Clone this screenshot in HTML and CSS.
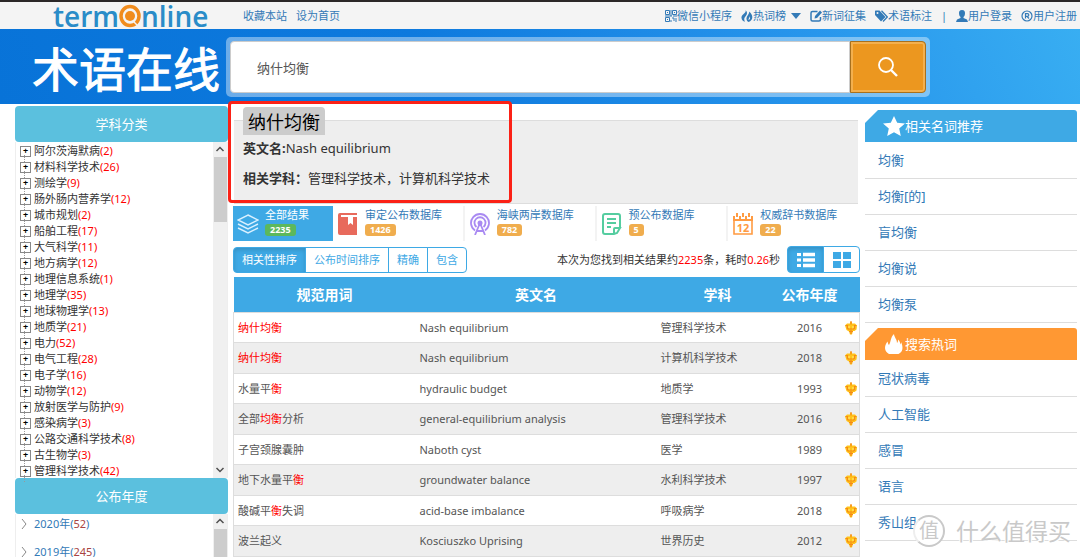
FILE: index.html
```html
<!DOCTYPE html>
<html lang="zh-CN">
<head>
<meta charset="utf-8">
<meta name="viewport" content="width=device-width, initial-scale=1">
<title>术语在线</title>
<link rel="stylesheet" href="styles.css">
</head>
<body>
<svg class="sprite" aria-hidden="true">
  <symbol id="gold" viewBox="0 0 12 14">
    <path d="M5 1h2v1.500h3l2 2-.5 4-2 1.500H8L7 13.500H5L4 10.500 1.500 9 0 4.500l2-2h3z" fill="#ffc31a"/>
    <path d="M6 0v3.500M.5 4.500h2v3l2 1M11.500 4.500h-2v3l-2 1M4 10.500h4M6 7v6" fill="none" stroke="#f58a18" stroke-width="1.200"/>
    <path d="M4 5v2M8 5v2" stroke="#fff27a"/>
  </symbol>
  <symbol id="up" viewBox="0 0 10 6"><path d="M1.500 5 5 1.500 8.500 5" fill="none" stroke="#505050" stroke-width="1.500"/></symbol>
  <symbol id="down" viewBox="0 0 10 6"><path d="M1.500 1 5 4.500 8.500 1" fill="none" stroke="#505050" stroke-width="1.500"/></symbol>
</svg>

<div class="topbar">
  <a class="brand" href="#" aria-label="termonline"><span>term</span><svg class="brand-o" viewBox="0 0 22 24"><ellipse cx="11" cy="12" rx="9" ry="9.500" fill="none" stroke="#f08c1e" stroke-width="3.500"/><circle cx="11" cy="12" r="5" fill="#f08c1e"/><path d="m14 17 4 4" stroke="#f4f4f4" stroke-width="1.500"/></svg><span>nline</span></a>
  <nav class="toplinks"><a href="#">收藏本站</a><a href="#">设为首页</a></nav>
  <nav class="usernav">
    <a href="#"><svg viewBox="0 0 12 12"><path d="M.5.500h4v4h-4zM7.500.500h4v4h-4zM.5 7.500h4v4h-4zM6 0v6M0 6h7M8 6h4M7 8h2v3M11 8v4M6 10v2" fill="none" stroke="currentColor"/><path d="M2 2h1v1H2zM9 2h1v1H9zM2 9h1v1H2z" fill="currentColor"/></svg>微信小程序</a>
    <a href="#"><svg viewBox="0 0 12 12"><path d="M4.500 0C6 3 0 4 .5 8c.3 2 1.500 3.500 3.500 3.800C2.500 9 3.500 7.500 4.800 6 6.500 4 6.500 2 4.500 0zM8 1.500c1 2.500-3 4.500-2.500 7.500.2 1.500 1 2.500 2 3C12.500 10.500 12.500 5 8 1.500zM8.300 6c.8 1.500-.8 2.500-.8 4 1.500-.5 2.300-2 .8-4z" fill="currentColor" fill-rule="evenodd"/></svg>热词榜<svg class="caret" viewBox="0 0 10 6"><path d="M0 0h10L5 6z" fill="currentColor"/></svg></a>
    <a href="#"><svg viewBox="0 0 12 12"><path d="M7.500 1.500H2.500a1.500 1.500 0 0 0-1.500 1.500v6.500A1.500 1.500 0 0 0 2.500 11H9a1.500 1.500 0 0 0 1.500-1.500V7" fill="none" stroke="currentColor" stroke-width="1.500"/><path d="M4.500 8.500 5 6l5-5.500L12 2.500 7 8z" fill="currentColor"/></svg>新词征集</a>
    <a href="#"><svg class="wide" viewBox="0 0 13 12"><path d="M0 1v4l6 6.500L10.500 7 4.500.500H.5zM2.500 2a1 1 0 1 1 0 2 1 1 0 0 1 0-2z" fill="currentColor" fill-rule="evenodd"/><path d="M6.500.800 12.300 7 8 11.500" fill="none" stroke="currentColor" stroke-width="1.300"/></svg>术语标注</a>
    <span class="bar">|</span>
    <a href="#"><svg viewBox="0 0 12 12"><path d="M6 0C3.500 0 3 1.500 3 3c0 2 .5 3 1.500 4v1L1 9.500 0 12h12l-1-2.500L7.500 8V7C8.500 6 9 5 9 3c0-1.500-.5-3-3-3z" fill="currentColor"/></svg>用户登录</a>
    <a href="#"><svg viewBox="0 0 12 12"><circle cx="6" cy="6" r="5" fill="none" stroke="currentColor" stroke-width="1.200"/><path d="M4.500 8.500V3.700H6.500a1.300 1.300 0 0 1 0 2.600H4.500M6 6.300 8 8.500" fill="none" stroke="currentColor" stroke-width="1.200"/></svg>用户注册</a>
  </nav>
</div>

<header class="header">
  <h1 class="logo">术语在线</h1>
  <form class="search">
    <input type="text" value="纳什均衡" aria-label="搜索术语">
    <button type="button" aria-label="搜索"><svg viewBox="0 0 20 20"><circle cx="8" cy="8" r="7" fill="none" stroke="#fff" stroke-width="1.800"/><path d="m13 13 6 6" stroke="#fff" stroke-width="2.400"/></svg></button>
  </form>
</header>

<div class="page">
  <aside class="left">
    <h2 class="side-title">学科分类</h2>
    <div class="scrollbox">
      <ul class="tree">
        <li>阿尔茨海默病<em>(2)</em></li><li>材料科学技术<em>(26)</em></li><li>测绘学<em>(9)</em></li><li>肠外肠内营养学<em>(12)</em></li><li>城市规划<em>(2)</em></li><li>船舶工程<em>(17)</em></li><li>大气科学<em>(11)</em></li><li>地方病学<em>(12)</em></li><li>地理信息系统<em>(1)</em></li><li>地理学<em>(35)</em></li><li>地球物理学<em>(13)</em></li><li>地质学<em>(21)</em></li><li>电力<em>(52)</em></li><li>电气工程<em>(28)</em></li><li>电子学<em>(16)</em></li><li>动物学<em>(12)</em></li><li>放射医学与防护<em>(9)</em></li><li>感染病学<em>(3)</em></li><li>公路交通科学技术<em>(8)</em></li><li>古生物学<em>(3)</em></li><li>管理科学技术<em>(42)</em></li>
      </ul>
      <div class="bar-track"><svg><use href="#up"/></svg><i></i><svg class="end"><use href="#down"/></svg></div>
    </div>
    <h2 class="side-title">公布年度</h2>
    <div class="scrollbox">
      <ul class="years">
        <li><svg viewBox="0 0 6 10"><path d="m1 0 4 5-4 5" fill="none" stroke="#888"/></svg><a href="#">2020年(<em>52</em>)</a></li>
        <li><svg viewBox="0 0 6 10"><path d="m1 0 4 5-4 5" fill="none" stroke="#888"/></svg><a href="#">2019年(<em>245</em>)</a></li>
      </ul>
      <div class="bar-track"><svg><use href="#up"/></svg><i></i></div>
    </div>
  </aside>

  <main class="main">
    <section class="definition">
      <h2>纳什均衡</h2>
      <p><b>英文名:</b>Nash equilibrium</p>
      <p><b>相关学科：</b>管理科学技术，计算机科学技术</p>
      <div class="highlight"></div>
    </section>

    <nav class="tabs">
      <a class="active" href="#"><svg viewBox="0 0 22 22"><path d="M11 2 21 7 11 12 1 7zM1 11l10 5 10-5M1 15l10 5 10-5" fill="none" stroke="#d9f0ff" stroke-width="1.500"/></svg><span>全部结果<b>2235</b></span></a>
      <a href="#"><svg viewBox="0 0 22 22"><path d="M3 0h17v2H4v2h16v18H3a2 2 0 0 1-2-2V2a2 2 0 0 1 2-2z" fill="#e86a5c"/><path d="M11 4h5v8l-2.500-2L11 12z" fill="#fff"/></svg><span>审定公布数据库<b>1426</b></span></a>
      <a href="#"><svg viewBox="0 0 22 22"><g fill="none" stroke="#a98af2" stroke-width="1.800"><path d="M6 17.500a9 9 0 1 1 10 0M7.500 14a5.500 5.500 0 1 1 7 0M6 22l5-12 5 12M8 18h6"/></g><circle cx="11" cy="10" r="2.500" fill="#a98af2"/></svg><span>海峡两岸数据库<b>782</b></span></a>
      <a href="#"><svg viewBox="0 0 22 22"><path d="M12 21H4a2 2 0 0 1-2-2V3a2 2 0 0 1 2-2h13a2 2 0 0 1 2 2v11M6 6h9M6 10h9M6 14h4" fill="none" stroke="#55cda0" stroke-width="2"/><path d="M13 21v-5a1 1 0 0 1 1-1h5l-3 5z" fill="none" stroke="#55cda0" stroke-width="2"/></svg><span>预公布数据库<b>5</b></span></a>
      <a href="#"><svg viewBox="0 0 22 22"><path d="M1 3h2v3h4V3h2v3h4V3h2v3h4V3h2v5H1z" fill="#ff9b42"/><path d="M5 0v4M11 0v4M17 0v4" stroke="#ff9b42" stroke-width="2"/><path d="M2 7v14h18V7" fill="none" stroke="#ff9b42" stroke-width="1.600"/><text x="11" y="18.500" text-anchor="middle" class="cal">12</text></svg><span>权威辞书数据库<b>22</b></span></a>
    </nav>

    <div class="toolbar">
      <div class="sort"><button class="on" type="button">相关性排序</button><button type="button">公布时间排序</button><button type="button">精确</button><button type="button">包含</button></div>
      <p>本次为您找到相关结果约<em>2235</em>条，耗时<em>0.26</em>秒</p>
      <div class="views">
        <button class="on" type="button" aria-label="列表"><svg viewBox="0 0 18 16"><path d="M6 2.500h12M6 8h12M6 13.500h12" stroke="#fff" stroke-width="3.500"/><path d="M0 2.500h4M0 8h4M0 13.500h4" stroke="#fff" stroke-width="3"/></svg></button>
        <button type="button" aria-label="网格"><svg viewBox="0 0 18 16"><path d="M0 0h8v7H0zM10 0h8v7h-8zM0 9h8v7H0zM10 9h8v7h-8z" fill="#3ea9e5"/></svg></button>
      </div>
    </div>

    <table class="results">
      <colgroup><col class="c-term"><col class="c-en"><col class="c-sub"><col class="c-year"><col class="c-icon"></colgroup>
      <thead><tr><th>规范用词</th><th>英文名</th><th>学科</th><th>公布年度</th><th></th></tr></thead>
      <tbody>
        <tr><td><em>纳什均衡</em></td><td>Nash equilibrium</td><td>管理科学技术</td><td>2016</td><td><svg><use href="#gold"/></svg></td></tr>
        <tr><td><em>纳什均衡</em></td><td>Nash equilibrium</td><td>计算机科学技术</td><td>2018</td><td><svg><use href="#gold"/></svg></td></tr>
        <tr><td>水量平<em>衡</em></td><td>hydraulic budget</td><td>地质学</td><td>1993</td><td><svg><use href="#gold"/></svg></td></tr>
        <tr><td>全部<em>均衡</em>分析</td><td>general-equilibrium analysis</td><td>管理科学技术</td><td>2016</td><td><svg><use href="#gold"/></svg></td></tr>
        <tr><td>子宫颈腺囊肿</td><td>Naboth cyst</td><td>医学</td><td>1989</td><td><svg><use href="#gold"/></svg></td></tr>
        <tr><td>地下水量平<em>衡</em></td><td>groundwater balance</td><td>水利科学技术</td><td>1997</td><td><svg><use href="#gold"/></svg></td></tr>
        <tr><td>酸碱平<em>衡</em>失调</td><td>acid-base imbalance</td><td>呼吸病学</td><td>2018</td><td><svg><use href="#gold"/></svg></td></tr>
        <tr><td>波兰起义</td><td>Kosciuszko Uprising</td><td>世界历史</td><td>2012</td><td><svg><use href="#gold"/></svg></td></tr>
      </tbody>
    </table>
  </main>

  <aside class="right">
    <h2 class="tag"><svg viewBox="0 0 22 20"><path d="m11 0 3.200 6.800 7.800.800-5.800 5 1.600 7.400L11 16.200 4.200 20l1.600-7.400L0 7.600l7.800-.8z" fill="#fff"/></svg>相关名词推荐</h2>
    <ul class="words"><li><a href="#">均衡</a></li><li><a href="#">均衡[的]</a></li><li><a href="#">盲均衡</a></li><li><a href="#">均衡说</a></li><li><a href="#">均衡泵</a></li></ul>
    <h2 class="tag orange"><svg viewBox="0 0 22 20"><path d="M6 20C1 17 1 12 4.500 7.500 5 9 5 10 6 11 8 8 7.500 3 11 0c0 3 3 5 3 9 1-1 1-2 1-3.500 2 2 2 3 2.500 5C18 9.500 18 9 18 8c2.500 5 2 10-2.500 12z" fill="#fff"/></svg>搜索热词</h2>
    <ul class="words"><li><a href="#">冠状病毒</a></li><li><a href="#">人工智能</a></li><li><a href="#">感冒</a></li><li><a href="#">语言</a></li><li><a href="#">秀山组</a></li></ul>
  </aside>
</div>
<div class="watermark"><span>值</span>什么值得买</div>
</body>
</html>
```
FILE: styles.css
```css
* { box-sizing: border-box; }
body { margin: 0; height: 100vh; overflow: hidden; background: #fff; color: #333; font: 11px/16px "Noto Sans", "Noto Sans CJK SC", sans-serif; }
h1, h2, p, ul { margin: 0; padding: 0; font-weight: 400; }
ul { list-style: none; }
a { color: #337ab7; text-decoration: none; }
em { font-style: normal; color: #f00; }
svg { display: block; flex: none; }
button { font: inherit; padding: 0; cursor: pointer; }
.sprite { position: absolute; width: 0; height: 0; }

.topbar { display: flex; align-items: center; height: 29px; padding: 0 3px 0 53px; border-top: 2px solid #2b2727; background: #f4f4f4; white-space: nowrap; }
.brand { display: flex; align-items: center; width: 190px; color: #2a8cc8; font: 600 28px/26px "Open Sans", "Noto Sans", sans-serif; }
.brand-o { width: 22px; height: 24px; }
.toplinks { display: flex; gap: 9px; }
.usernav { display: flex; align-items: center; gap: 9px; margin-left: auto; }
.usernav a { display: flex; align-items: center; }
.usernav svg { width: 12px; height: 12px; }
.usernav .wide { width: 13px; }
.usernav .caret { width: 10px; height: 6px; margin-left: 5px; }
.bar { color: #337ab7; }

.header { display: flex; align-items: center; height: 75px; padding: 0 150px 0 32px; background: linear-gradient(65deg, #0873d8 0%, #0e7ade 40%, #2896ec 76%, #38aef2 100%); }
.logo { width: 194px; flex: none; color: #fff; font: 400 47px/60px "Noto Sans CJK SC", sans-serif; -webkit-text-stroke: 1px #fff; white-space: nowrap; }
.search { display: flex; flex: 1; height: 60px; padding: 4px; border-radius: 5px; background: rgba(255, 255, 255, .4); }
.search input { flex: 1; min-width: 0; padding: 2px 26px 0; border: 1px solid #ccc; border-radius: 4px 0 0 4px; background: #fff; color: #555; font: inherit; font-size: 13px; }
.search button { display: grid; place-items: center; width: 76px; border: 1px solid #a8701c; border-radius: 0 4px 4px 0; background: #ec971f; box-shadow: inset 0 0 0 2px #f3b04e; }
.search button svg { width: 20px; height: 20px; }

.page { display: grid; grid-template-columns: 213px minmax(0, 1fr) 212px; gap: 5px; padding: 2px 3px 0 15px; }
.side-title { height: 36px; border-radius: 4px; background: #5bc0de; color: #fff; font-size: 13px; line-height: 36px; text-align: center; }
.scrollbox { display: flex; border: 1px solid #eee; border-top: 0; border-bottom: 0; }
.tree { flex: 1; padding-left: 4px; }
.tree li { position: relative; height: 16px; padding-left: 14px; line-height: 18px; white-space: nowrap; }
.tree li::before { content: "+"; position: absolute; left: 0; top: 4px; width: 9px; height: 9px; border: 1px solid #888; color: #000; font-size: 9px; font-weight: 700; line-height: 7px; text-align: center; }
.tree li::after { content: ""; position: absolute; left: 4px; top: 13px; height: 7px; border-left: 1px dotted #999; }
.bar-track { display: flex; flex-direction: column; align-items: center; width: 14px; padding-top: 4px; background: #f0f0f0; }
.bar-track svg { width: 10px; height: 6px; }
.bar-track i { width: 13px; height: 65px; margin-top: 5px; background: #cdcdcd; }
.bar-track .end { margin: auto 0 5px; }
.years { flex: 1; padding: 0 5px; }
.years li { display: flex; align-items: center; gap: 7px; height: 20px; margin-bottom: 8px; }
.years svg { width: 6px; height: 10px; }
.years em { color: #a94442; }

.main { min-width: 0; }
.definition { position: relative; height: 98px; margin: 0 2px 0 1px; padding: 1px 9px; background: linear-gradient(#fff 14px, #ddd 14px, #ddd 15px, #eee 15px); border-bottom: 1px solid #ddd; }
.definition h2 { display: inline-block; height: 28px; margin-bottom: 3px; padding: 0 5px; border-radius: 4px 4px 0 0; background: #ccc; color: #000; font-size: 18px; line-height: 30px; }
.definition p { margin-bottom: 10px; font-size: 13px; line-height: 20px; }
.highlight { position: absolute; left: -6px; top: -5px; width: 284px; height: 102px; border: 3px solid #fb2116; border-radius: 4px; }

.tabs { display: grid; grid-template-columns: 100px repeat(4, minmax(0, 1fr)); margin-top: 2px; height: 35px; }
.tabs a { display: flex; gap: 6px; padding-left: 4px; border-right: 2px solid #f3f3f3; }
.tabs a:last-child { border-right: 0; }
.tabs .active { background: #3ea9e5; color: #fff; border: 0; }
.tabs svg { width: 22px; height: 22px; margin-top: 7px; }
.tabs span { display: flex; flex-direction: column; align-items: flex-start; white-space: nowrap; line-height: 18px; }
.tabs b { padding: 0 5px; border-radius: 3px; background: #f0ad4e; color: #fff; font-size: 9px; line-height: 12px; }
.tabs .active b { background: #5cb85c; }
.cal { fill: #ff9b42; font-size: 11px; font-weight: 700; }

.toolbar { display: flex; align-items: center; margin: 5px 0 4px; height: 27px; }
.sort, .views { display: flex; }
.sort { margin-right: auto; }
.toolbar button { height: 26px; padding: 0 8px; margin-left: -1px; border: 1px solid #3ea9e5; background: #fff; color: #3ea9e5; }
.toolbar button:first-child { margin-left: 0; border-radius: 4px 0 0 4px; }
.toolbar button:last-child { border-radius: 0 4px 4px 0; }
.toolbar .on { background: #3ea9e5; color: #fff; box-shadow: inset 0 2px 4px rgba(0, 0, 0, .15); }
.toolbar .views button { width: 37px; height: 27px; }
.views svg { width: 18px; height: 16px; margin: auto; }
.toolbar p { margin-right: 7px; }

.results { width: 100%; table-layout: fixed; border-collapse: collapse; color: #555; }
.c-term { width: 182px; }
.c-sub { width: 122px; }
.c-year { width: 62px; }
.c-icon { width: 19px; }
.results th { height: 35px; padding: 2px 0 0; background: #3ea9e5; color: #fff; font-size: 14px; font-weight: 700; white-space: nowrap; }
.results td { height: 30px; padding: 1px 4px 0; border-bottom: 1px solid #ddd; }
.results tr:nth-child(even) td { height: 31px; background: #eee; }
.results td:nth-child(4) { text-align: center; }
.results svg { width: 12px; height: 14px; }
.results tbody { border: 1px solid #ddd; }

.right { padding-top: 4px; }
.tag { display: flex; align-items: center; height: 32px; padding-left: 18px; border-radius: 0 3px 0 0; background: #3ea9e5; color: #fff; font-size: 13px; clip-path: polygon(13px 0, 100% 0, 100% 100%, 0 100%, 0 13px); }
.tag svg { width: 22px; height: 20px; }
.orange { background: #ff9833; }
.words { margin-bottom: 5px; padding-top: 1px; }
.words li { height: 36px; padding-left: 13px; border-bottom: 1px solid #ddd; font-size: 13px; line-height: 35px; }

.watermark { position: absolute; right: 9px; bottom: 10px; display: flex; align-items: center; gap: 11px; color: #c9c9c9; font-size: 23px; line-height: 32px; text-shadow: 1px 1px 0 #fff, -1px -1px 0 #fff; }
.watermark span { width: 32px; height: 32px; border-radius: 50%; background: #fff; border: 2px solid #c9c9c9; border-left-color: #eee; text-align: center; font-size: 20px; line-height: 28px; }
```
